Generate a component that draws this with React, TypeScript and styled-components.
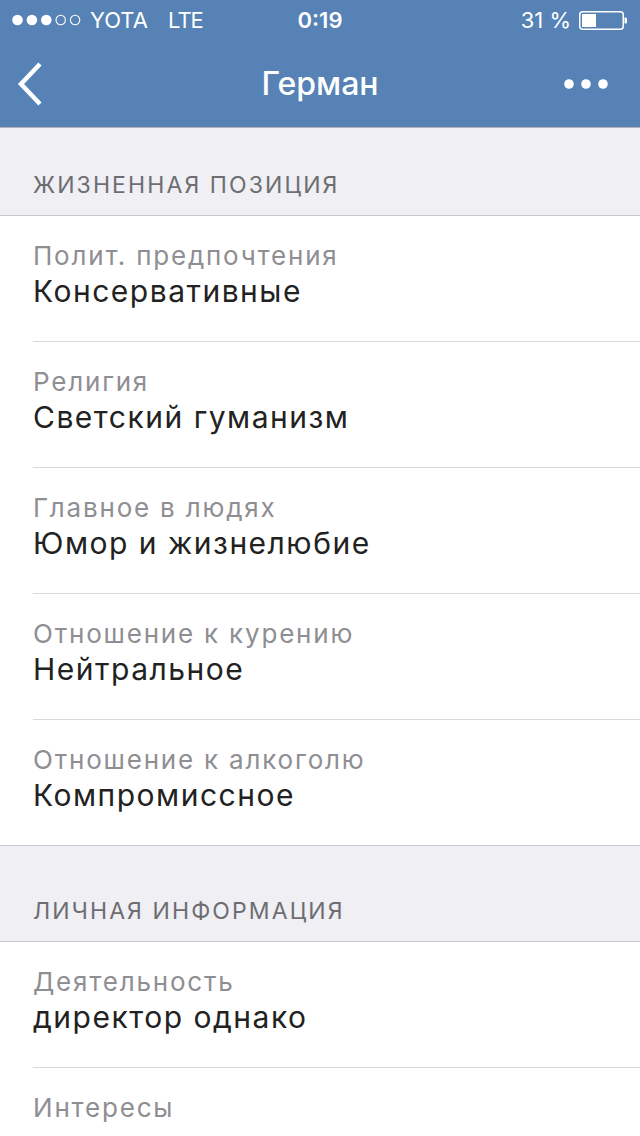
import styled, { createGlobalStyle } from 'styled-components'

const GlobalStyle = createGlobalStyle`
  html, body {
    margin: 0;
    padding: 0;
    background: #efeff4;
    font-family: Inter, 'Liberation Sans', Arial, sans-serif;
  }
`

const sections = [
  {
    title: 'Жизненная позиция',
    rows: [
      { label: 'Полит. предпочтения', value: 'Консервативные' },
      { label: 'Религия', value: 'Светский гуманизм' },
      { label: 'Главное в людях', value: 'Юмор и жизнелюбие' },
      { label: 'Отношение к курению', value: 'Нейтральное' },
      { label: 'Отношение к алкоголю', value: 'Компромиссное' },
    ],
  },
  {
    title: 'Личная информация',
    rows: [
      { label: 'Деятельность', value: 'директор однако' },
      { label: 'Интересы', value: '' },
    ],
  },
]

const Screen = styled.div`
  width: 640px;
  height: 1136px;
  overflow: hidden;
  background: #efeff4;
`

const TopBar = styled.header`
  background: #5682b5;
  color: #fff;
  border-bottom: 1px solid #b4b4b8;
`

const StatusBar = styled.div`
  height: 40px;
  display: grid;
  grid-template-columns: 1fr auto 1fr;
  align-items: center;
  padding: 0 12px;
  font-size: 22px;
`

const StatusLeft = styled.div`
  display: flex;
  align-items: center;
`

const Carrier = styled.span`
  margin-left: 8px;
  word-spacing: 14px;
`

const Lte = styled.span`
  letter-spacing: -1px;
`

const Clock = styled.div`
  font-weight: 600;
  font-size: 22px;
`

const StatusRight = styled.div`
  display: flex;
  justify-content: flex-end;
  align-items: center;
  gap: 8px;
`

const NavBar = styled.div`
  height: 87px;
  display: grid;
  grid-template-columns: 90px 1fr 90px;
  align-items: center;
`

const Title = styled.h1`
  margin: 0;
  text-align: center;
  font-size: 32px;
  font-weight: 500;
`

const NavButton = styled.div<{ $right?: boolean }>`
  display: flex;
  align-items: center;
  justify-content: ${(p) => (p.$right ? 'flex-end' : 'flex-start')};
  padding: ${(p) => (p.$right ? '0 32px 0 0' : '0 0 0 14px')};
`

const SectionHeader = styled.div<{ $first?: boolean }>`
  height: ${(p) => (p.$first ? '88px' : '96px')};
  padding: ${(p) => (p.$first ? '43px' : '51px')} 33px 0;
  box-sizing: border-box;
  font-size: 23px;
  line-height: 28px;
  letter-spacing: 2.1px;
  color: #6d6d72;
  text-transform: uppercase;
  border-bottom: 1px solid #c8c7cc;
`

const Group = styled.div`
  background: #fff;
  border-bottom: 1px solid #c8c7cc;
`

const Row = styled.div`
  margin-left: 33px;
  height: 126px;
  padding-top: 26px;
  box-sizing: border-box;
  border-bottom: 1px solid #d9d9dc;

  &:last-child {
    border-bottom: none;
    height: 125px;
  }
`

const Label = styled.div`
  font-size: 26px;
  line-height: 28px;
  letter-spacing: 1.8px;
  color: #8e8e93;
`

const Value = styled.div`
  font-size: 30px;
  line-height: 34px;
  letter-spacing: 1.5px;
  color: #222;
  margin-top: 4px;
`

function Signal() {
  return (
    <svg width="70" height="12" viewBox="0 0 70 12">
      {[0, 1, 2, 3, 4].map((i) =>
        i < 3 ? (
          <circle key={i} cx={5.5 + i * 14.4} cy="6" r="5.3" fill="#fff" />
        ) : (
          <circle key={i} cx={5.5 + i * 14.4} cy="6" r="4.7" fill="none" stroke="#fff" strokeWidth="1.1" />
        ),
      )}
    </svg>
  )
}

function Battery() {
  return (
    <svg width="49" height="19" viewBox="0 0 49 19">
      <rect x="0.75" y="0.75" width="43.5" height="17.5" rx="3" fill="none" stroke="#fff" strokeWidth="1.5" />
      <rect x="3" y="3" width="14" height="13" fill="#fff" />
      <path d="M45.5 6.5 h1 a1.5 1.5 0 0 1 1.5 1.5 v3 a1.5 1.5 0 0 1 -1.5 1.5 h-1 z" fill="#fff" />
    </svg>
  )
}

export default function App() {
  return (
    <Screen>
      <GlobalStyle />
      <TopBar>
        <StatusBar>
          <StatusLeft>
            <Signal />
            <Carrier>
              YOTA <Lte>LTE</Lte>
            </Carrier>
          </StatusLeft>
          <Clock>0:19</Clock>
          <StatusRight>
            <span>31 %</span>
            <Battery />
          </StatusRight>
        </StatusBar>
        <NavBar>
          <NavButton>
            <svg width="32" height="44" viewBox="0 0 32 44">
              <path d="M26 2 L7 22 L26 42" fill="none" stroke="#fff" strokeWidth="4.5" />
            </svg>
          </NavButton>
          <Title>Герман</Title>
          <NavButton $right>
            <svg width="44" height="10" viewBox="0 0 44 10">
              <circle cx="5" cy="5" r="4.8" fill="#fff" />
              <circle cx="22" cy="5" r="4.8" fill="#fff" />
              <circle cx="39" cy="5" r="4.8" fill="#fff" />
            </svg>
          </NavButton>
        </NavBar>
      </TopBar>
      {sections.map((section, i) => (
        <section key={section.title}>
          <SectionHeader $first={i === 0}>{section.title}</SectionHeader>
          <Group>
            {section.rows.map((row) => (
              <Row key={row.label}>
                <Label>{row.label}</Label>
                {row.value && <Value>{row.value}</Value>}
              </Row>
            ))}
          </Group>
        </section>
      ))}
    </Screen>
  )
}
